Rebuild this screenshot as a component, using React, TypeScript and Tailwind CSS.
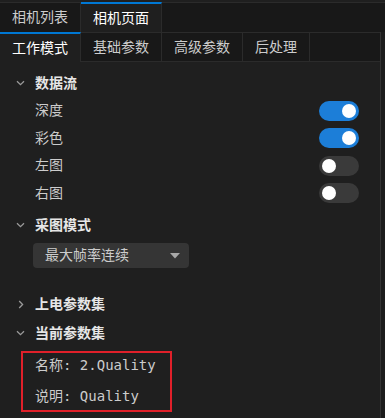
import React from "react";

const FONT = '"DejaVu Sans Mono", "Noto Sans CJK SC", monospace';

function ChevronDown() {
  return (
    <svg width="9" height="6" viewBox="0 0 9 6" fill="none">
      <path d="M1 1.2 L4.5 4.6 L8 1.2" stroke="#9a9a9a" strokeWidth="1.3" />
    </svg>
  );
}
function ChevronRight() {
  return (
    <svg width="6" height="9" viewBox="0 0 6 9" fill="none">
      <path d="M1.2 1 L4.6 4.5 L1.2 8" stroke="#9a9a9a" strokeWidth="1.3" />
    </svg>
  );
}

function Switch({ on }: { on: boolean }) {
  return (
    <div
      className={
        "w-[40px] h-[20px] rounded-full flex items-center px-[3px] " +
        (on ? "bg-[#1c7ed8] justify-end" : "bg-[#3a3a3a] justify-start")
      }
    >
      <div className="w-[14px] h-[14px] rounded-full bg-white" />
    </div>
  );
}

function Header({ label, open }: { label: string; open: boolean }) {
  return (
    <div className="h-[28px] flex items-center">
      <div className="w-[35px] pl-[16px] flex items-center">
        {open ? <ChevronDown /> : <div className="pl-[2px]"><ChevronRight /></div>}
      </div>
      <span className="text-[14px] font-bold text-[#e6e6e6]">{label}</span>
    </div>
  );
}

function Row({ label, on }: { label: string; on: boolean }) {
  return (
    <div className="h-[27.5px] flex items-center justify-between pl-[35px] pr-[21px]">
      <span className="text-[14px] text-[#cccccc]">{label}</span>
      <Switch on={on} />
    </div>
  );
}

export default function App() {
  return (
    <div
      className="w-[385px] h-[418px] bg-[#1f1f1f] overflow-hidden flex flex-col"
      style={{ fontFamily: FONT }}
    >
      {/* top tabs */}
      <div className="mt-[2px] h-[30px] flex bg-[#181818] border-t border-[#2b2b2b]">
        <div className="px-[12px] flex items-center bg-[#181818] text-[14px] text-[#cccccc] border-r border-[#2b2b2b]">
          相机列表
        </div>
        <div className="px-[12px] flex items-center bg-[#1f1f1f] text-[14px] text-[#ffffff] border-r border-[#2b2b2b] border-t-2 border-t-[#0078d4] -mt-[1px]">
          相机页面
        </div>
        <div className="flex-1" />
      </div>
      <div className="flex flex-1 min-h-0">
        <div className="flex-1 flex flex-col">
          {/* second tabs */}
          <div className="h-[30px] flex bg-[#181818] border-t border-[#2b2b2b]">
            <div className="px-[12px] flex items-center bg-[#1f1f1f] text-[14px] text-[#ffffff] border-r border-[#2b2b2b] border-t-2 border-t-[#0078d4] -mt-[1px]">
              工作模式
            </div>
            <div className="px-[12px] flex items-center text-[14px] text-[#cccccc] border-r border-b border-[#2b2b2b]">
              基础参数
            </div>
            <div className="px-[12px] flex items-center text-[14px] text-[#cccccc] border-r border-b border-[#2b2b2b]">
              高级参数
            </div>
            <div className="px-[12px] flex items-center text-[14px] text-[#cccccc] border-r border-b border-[#2b2b2b]">
              后处理
            </div>
            <div className="flex-1 border-b border-[#2b2b2b]" />
          </div>

          {/* content */}
          <div className="pt-[7px] flex flex-col">
            <Header label="数据流" open />
            <Row label="深度" on />
            <Row label="彩色" on />
            <Row label="左图" on={false} />
            <Row label="右图" on={false} />

            <div className="mt-[4px]">
              <Header label="采图模式" open />
            </div>
            <div className="mt-[4px] ml-[33px] w-[156px] h-[25px] rounded-[4px] bg-[#353535] flex items-center justify-between pl-[12px] pr-[9px]">
              <span className="text-[14px] text-[#cccccc]">最大帧率连续</span>
              <svg width="10" height="6" viewBox="0 0 10 6">
                <path d="M0 0 L10 0 L5 5.5 Z" fill="#a8a8a8" />
              </svg>
            </div>

            <div className="mt-[22px]">
              <Header label="上电参数集" open={false} />
            </div>
            <div className="mt-[1px]">
              <Header label="当前参数集" open />
            </div>
            <div className="mt-[4px] ml-[21px] w-[151px] h-[61px] border-2 border-[#e0202a] flex flex-col justify-between pl-[12px] pt-[2px] pb-[4px]">
              <span className="text-[14px] text-[#cccccc] leading-[20px]">名称: 2.Quality</span>
              <span className="text-[14px] text-[#cccccc] leading-[20px]">说明: Quality</span>
            </div>
          </div>
        </div>
        {/* scrollbar rail */}
        <div className="w-[5px] border-l border-[#333333] bg-[#1c1c1c]" />
      </div>
    </div>
  );
}
